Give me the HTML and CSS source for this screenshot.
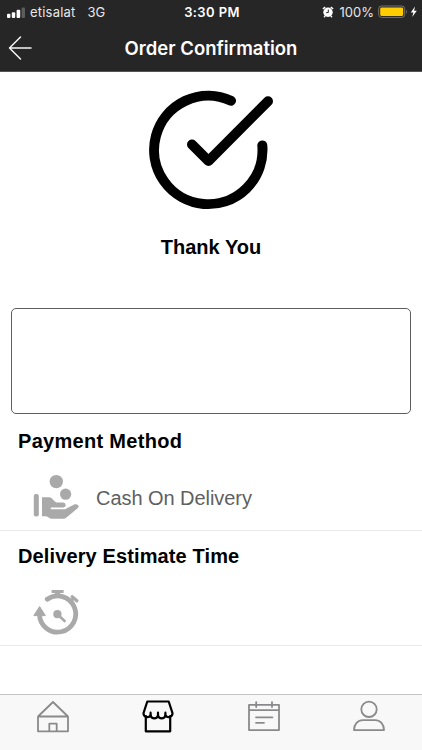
FILE: index.html
```html
<!DOCTYPE html>
<html lang="en">
<head>
  <meta charset="UTF-8">
  <meta name="viewport" content="width=device-width, initial-scale=1">
  <title>Order Confirmation</title>
  <link rel="stylesheet" href="styles.css">
</head>
<body>
  <header class="header">
    <div class="status-bar">
      <div class="status-left">
        <svg class="signal" width="20" height="12" viewBox="0 0 20 12">
          <rect x="1" y="6.7" width="3.4" height="4.3" rx="1" fill="#fff"/>
          <rect x="5.8" y="5.2" width="3.4" height="5.8" rx="1" fill="#fff"/>
          <rect x="10.6" y="2.8" width="3.6" height="8.2" rx="1" fill="#fff"/>
          <rect x="15.6" y=".4" width="3.4" height="10.6" rx="1" fill="#5c5c5c"/>
        </svg>
        <span class="carrier">etisalat</span>
        <span class="network">3G</span>
      </div>
      <span class="clock">3:30 PM</span>
      <div class="status-right">
        <svg class="alarm" width="12" height="12" viewBox="0 0 12 12">
          <circle cx="6" cy="6.3" r="4.7" fill="#fff"/>
          <path d="M1.3 2.6 2.8 1.4M10.7 2.6 9.2 1.4M2.9 10.2l-.5.6M9.1 10.2l.5.6" stroke="#fff" stroke-width="1.4" stroke-linecap="round"/>
          <path d="M6.3 3.6v3H4.2" fill="none" stroke="#262626" stroke-width="1"/>
        </svg>
        <span class="percent">100%</span>
        <svg class="battery" width="40" height="14" viewBox="0 0 40 14">
          <rect x=".7" y="1" width="26" height="11.4" rx="2.8" fill="none" stroke="#77736a"/>
          <rect x="2.2" y="2.5" width="23" height="8.4" rx="1.4" fill="#ffcc02"/>
          <path d="M28.2 4.7q1.5 2 0 4z" fill="#888"/>
          <path d="M37 1.6 32.8 7.4h2.6L34.2 12l4.6-6.2h-2.7z" fill="#fff"/>
        </svg>
      </div>
    </div>
    <div class="nav-bar">
      <button class="back-button" aria-label="Back">
        <svg width="24" height="24" viewBox="0 0 24 24">
          <path d="M12.5 1 1.5 12l11 11M1.5 12H23" fill="none" stroke="#f5f5f5" stroke-width="1.5" stroke-linecap="round" stroke-linejoin="round"/>
        </svg>
      </button>
      <h1>Order Confirmation</h1>
    </div>
  </header>

  <main class="content">
    <div class="thanks">
      <svg class="check" width="130" height="124" viewBox="0 0 130 124">
        <path d="M85 12.7A54.2 54.2 0 1 0 116.3 57.4" />
        <path d="M46 56.5 62.5 73 122 13.2" />
      </svg>
      <h2>Thank You</h2>
    </div>

    <div class="message-box"></div>

    <section class="section payment">
      <h3>Payment Method</h3>
      <div class="row">
        <svg class="row-icon" width="46" height="46" viewBox="0 0 46 46">
          <circle cx="23.3" cy="7.6" r="6.7"/>
          <circle cx="32.6" cy="20.2" r="5.6"/>
          <rect x=".8" y="20" width="5" height="22.4" rx="2"/>
          <path d="M9 23.2h7.2c3.4 0 5 5.4 8.4 5.4h5.6a2.5 2.5 0 0 1 0 5H17.8v1.6H32l9.2-4.6c3.2-1.4 5.8 1.4 3.4 3.6L35 42.2c-1.8 1.7-3.2 2.6-5.6 2.6H19.6c-3.6 0-4.6-2.6-7-2.6H9z"/>
        </svg>
        <span class="row-text">Cash On Delivery</span>
      </div>
    </section>

    <section class="section delivery">
      <h3>Delivery Estimate Time</h3>
      <div class="row">
        <svg class="row-icon" width="46" height="46" viewBox="0 0 46 46">
          <path d="M14.2 10.2A18.1 18.1 0 1 1 6.5 25" fill="none" stroke="#a9a9a9" stroke-width="4.8" stroke-linecap="round"/>
          <path d="M6.6 17.6 12.4 26.6H.8z" stroke="#a9a9a9" stroke-width="1" stroke-linejoin="round"/>
          <path d="M18.6 .9h12v3.2h-3.4V8h-5.2V4.1h-3.4z"/>
          <path d="m38 12 2.6-2.8M39.2 7.6l4.6 4.2" stroke="#a9a9a9" stroke-width="3.2" stroke-linecap="round"/>
          <circle cx="24.4" cy="25.2" r="4.1"/>
          <path d="m26 26.8 5.6 5.2" stroke="#a9a9a9" stroke-width="2.6" stroke-linecap="round"/>
        </svg>
      </div>
    </section>
  </main>

  <nav class="tab-bar">
    <a class="tab">
      <svg width="34" height="34" viewBox="0 0 34 34">
        <path d="M2 16.5h30v14.8H2zM2.5 16 17 2l14.5 14M13.3 31v-7.3h7.4V31"/>
      </svg>
    </a>
    <a class="tab active">
      <svg width="34" height="34" viewBox="0 0 34 34">
        <path d="M6.3 1.5h21.4l3.8 11.7a3.9 3.9 0 0 1-7.1 2.2 3.8 3.8 0 0 1-7.4 0 3.8 3.8 0 0 1-7.4 0 3.9 3.9 0 0 1-7.1-2.2z"/>
        <path d="M4.8 16v15.3h24.4V16M9.6 16v-3.3M17 16v-3.3M24.4 16v-3.3"/>
      </svg>
    </a>
    <a class="tab">
      <svg width="34" height="34" viewBox="0 0 34 34">
        <path d="M2 4.8h30v25.3H2zM2 10.1h30M9.2 2.1v5M25 2.1v5M9 17.3h16.4M9 22.8h8"/>
      </svg>
    </a>
    <a class="tab">
      <svg width="34" height="34" viewBox="0 0 34 34">
        <circle cx="17" cy="9.3" r="7.7"/>
        <path d="M2 30.1c0-5.8 3.8-9.9 9-9.9h12c5.2 0 9 4.1 9 9.9z"/>
      </svg>
    </a>
  </nav>
</body>
</html>
```

FILE: styles.css
```css
body {
  margin: 0;
  height: 750px;
  display: flex;
  flex-direction: column;
  overflow: hidden;
  background: #fff;
  color: #000;
  font-family: "Liberation Sans", Arial, sans-serif;
}

h1, h2, h3 {
  margin: 0;
}

svg {
  display: block;
}

/* header */
.header {
  height: 72px;
  box-sizing: border-box;
  background: #262626;
  color: #fff;
  border-bottom: 1px solid #555;
  font-family: Inter, sans-serif;
}

.status-bar {
  display: grid;
  grid-template-columns: 1fr auto 1fr;
  align-items: center;
  height: 24px;
  padding: 0 4px 0 6px;
  font-size: 13px;
  line-height: 24px;
}

.status-left,
.status-right {
  display: flex;
  align-items: center;
  color: #e6e6e6;
}

.status-right {
  justify-content: flex-end;
}

.signal {
  margin-top: 1px;
}

.carrier {
  margin-left: 4px;
  letter-spacing: 0.2px;
}

.network {
  margin-left: 12px;
}

.clock {
  font-weight: 600;
  letter-spacing: 0.4px;
}

.percent {
  margin: 0 4px 0 6px;
}

.nav-bar {
  display: grid;
  grid-template-columns: 44px 1fr 44px;
  align-items: center;
  height: 47px;
}

.back-button {
  padding: 0 0 0 8px;
  border: none;
  background: none;
  cursor: pointer;
}

.nav-bar h1 {
  font-size: 18.5px;
  font-weight: 600;
  line-height: 24px;
  text-align: center;
}

/* content */
.content {
  flex: 1;
}

.thanks {
  display: flex;
  flex-direction: column;
  align-items: center;
  padding-top: 16px;
}

.check {
  fill: none;
  stroke: #000;
  stroke-width: 10;
  stroke-linecap: round;
  stroke-linejoin: round;
}

.thanks h2 {
  margin-top: 23px;
  font-size: 20px;
  line-height: 24px;
}

.message-box {
  height: 106px;
  margin: 49px 11px 0;
  box-sizing: border-box;
  border: 1px solid #5e5e5e;
  border-radius: 5px;
}

.section {
  box-sizing: border-box;
  border-bottom: 1px solid #e9e9e9;
}

.payment {
  height: 117px;
  padding-top: 15px;
}

.delivery {
  height: 115px;
  padding-top: 13px;
}

.section h3 {
  padding-left: 18px;
  font-size: 20px;
  line-height: 24px;
}

.payment h3 {
  letter-spacing: 0.3px;
}

.delivery h3 {
  letter-spacing: 0.12px;
}

.row {
  display: flex;
  align-items: center;
  height: 46px;
  padding: 21px 0 0 33px;
}

.row-icon {
  fill: #a9a9a9;
}

.row-text {
  margin: 2px 0 0 17px;
  color: #606060;
  font-size: 20px;
  letter-spacing: -0.05px;
}

/* bottom tabs */
.tab-bar {
  display: grid;
  grid-template-columns: repeat(4, 1fr);
  height: 56px;
  box-sizing: border-box;
  padding-top: 5px;
  background: #f8f8f8;
  border-top: 1px solid #c4c4c4;
}

.tab {
  display: flex;
  justify-content: center;
}

.tab svg {
  fill: none;
  stroke: #8a8a8c;
  stroke-width: 1.8;
  stroke-linecap: round;
  stroke-linejoin: round;
}

.tab.active svg {
  stroke: #000;
  stroke-width: 2.2;
}
```
